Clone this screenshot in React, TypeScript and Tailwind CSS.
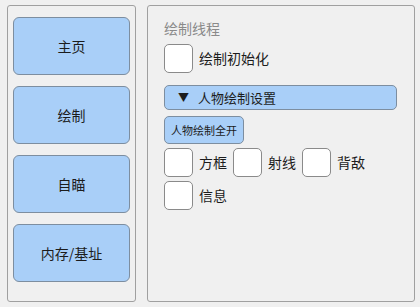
const navItems = ['主页', '绘制', '自瞄', '内存/基址'];

function Box({ label }: { label: string }) {
  return (
    <label className="flex items-center">
      <span className="w-[29px] h-[29px] rounded-[5px] border border-[#8a8a8a] bg-white" />
      <span className="ml-[6px] text-[14px] text-[#1c1c1c]">{label}</span>
    </label>
  );
}

export default function App() {
  return (
    <div
      className="w-[420px] h-[307px] bg-[#f0f0f0] flex pl-[7px] pt-[5px] pb-[5px] pr-[5px] gap-[11px]"
      style={{ fontFamily: '"Noto Sans CJK SC", "Noto Sans", sans-serif' }}
    >
      <nav className="w-[129px] h-[297px] border border-[#a0a0a0] rounded-[3px] px-[5px] pt-[11px] flex flex-col gap-[11px]">
        {navItems.map((n) => (
          <button
            key={n}
            className="h-[58px] w-full rounded-[6px] border border-[#7d8ea0] bg-[#a9cff8] text-[14px] text-[#1c1c1c]"
          >
            {n}
          </button>
        ))}
      </nav>
      <main className="flex-1 h-[297px] border border-[#a0a0a0] rounded-[3px] pl-[16px] pr-[17px] pt-[11px]">
        <div className="text-[14px] leading-[22px] text-[#8a8a8a]">绘制线程</div>
        <div className="mt-[5px]">
          <Box label="绘制初始化" />
        </div>
        <div className="mt-[12px] h-[25px] rounded-[5px] border border-[#7d8ea0] bg-[#a9cff8] flex items-center pl-[13px] text-[13px] text-[#1c1c1c]">
          <span className="text-[11px]">▼</span>
          <span className="ml-[9px]">人物绘制设置</span>
        </div>
        <button className="mt-[6px] h-[28px] px-[6px] rounded-[5px] border border-[#7d8ea0] bg-[#a9cff8] text-[11px] text-[#1c1c1c]">
          人物绘制全开
        </button>
        <div className="mt-[4px] flex gap-[6px]">
          <Box label="方框" />
          <Box label="射线" />
          <Box label="背敌" />
        </div>
        <div className="mt-[4px]">
          <Box label="信息" />
        </div>
      </main>
    </div>
  );
}
